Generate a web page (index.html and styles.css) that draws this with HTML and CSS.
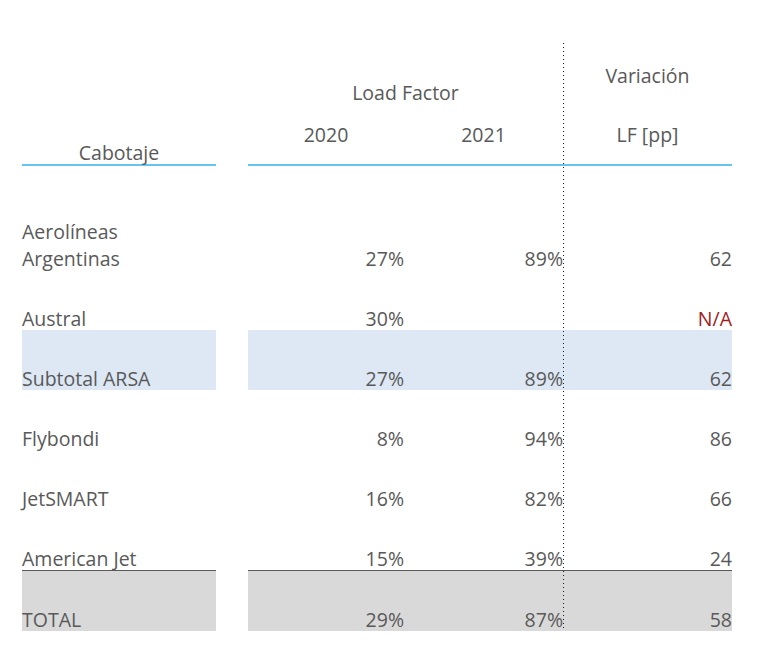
FILE: index.html
```html
<!DOCTYPE html>
<html lang="es">
<head>
<meta charset="utf-8">
<title>Cabotaje - Load Factor</title>
<link rel="stylesheet" href="styles.css">
</head>
<body>
<div class="table">
  <div class="divider"></div>
  <div class="head">
    <div class="label head-label"><span class="t">Cabotaje</span></div>
    <div class="data head-data">
      <div class="lf-group">
        <div class="group-title">Load Factor</div>
        <div class="years">
          <div class="c1 year">2020</div>
          <div class="c2 year">2021</div>
        </div>
      </div>
      <div class="c3 var-group">
        <div class="var-title">Variación</div>
        <div class="var-sub">LF [pp]</div>
      </div>
    </div>
  </div>
  <div class="rows">
    <div class="row">
      <div class="label"><span class="t">Aerolíneas<br>Argentinas</span></div>
      <div class="data"><div class="num c1"><span class="t">27%</span></div><div class="num c2"><span class="t">89%</span></div><div class="num c3"><span class="t">62</span></div></div>
    </div>
    <div class="row">
      <div class="label"><span class="t">Austral</span></div>
      <div class="data"><div class="num c1"><span class="t">30%</span></div><div class="num c2"></div><div class="num c3 na"><span class="t">N/A</span></div></div>
    </div>
    <div class="row subtotal">
      <div class="label"><span class="t">Subtotal ARSA</span></div>
      <div class="data"><div class="num c1"><span class="t">27%</span></div><div class="num c2"><span class="t">89%</span></div><div class="num c3"><span class="t">62</span></div></div>
    </div>
    <div class="row">
      <div class="label"><span class="t">Flybondi</span></div>
      <div class="data"><div class="num c1"><span class="t">8%</span></div><div class="num c2"><span class="t">94%</span></div><div class="num c3"><span class="t">86</span></div></div>
    </div>
    <div class="row">
      <div class="label"><span class="t">JetSMART</span></div>
      <div class="data"><div class="num c1"><span class="t">16%</span></div><div class="num c2"><span class="t">82%</span></div><div class="num c3"><span class="t">66</span></div></div>
    </div>
    <div class="row">
      <div class="label"><span class="t">American Jet</span></div>
      <div class="data"><div class="num c1"><span class="t">15%</span></div><div class="num c2"><span class="t">39%</span></div><div class="num c3"><span class="t">24</span></div></div>
    </div>
    <div class="row total">
      <div class="label"><span class="t">TOTAL</span></div>
      <div class="data"><div class="num c1"><span class="t">29%</span></div><div class="num c2"><span class="t">87%</span></div><div class="num c3"><span class="t">58</span></div></div>
    </div>
  </div>
</div>
</body>
</html>
```

FILE: styles.css
```css
html, body {
  margin: 0;
  padding: 0;
  background: #ffffff;
}

body {
  padding: 43px 0 0 22px;
  font-family: "Open Sans", "Liberation Sans", sans-serif;
  font-size: 19.5px;
  line-height: 27px;
  color: #595959;
}

.table {
  position: relative;
  width: 710px;
}

.divider {
  position: absolute;
  left: 541px;
  top: 0;
  width: 1px;
  height: 589px;
  background: repeating-linear-gradient(to bottom, #1e1e1e 0 1px, transparent 1px 4px);
  z-index: 2;
}

.t {
  display: block;
  margin-bottom: -2px;
}

/* header */
.head {
  display: flex;
  height: 123px;
}

.label {
  width: 194px;
  margin-right: 32px;
  flex: none;
}

.data {
  display: flex;
  flex: none;
  width: 484px;
}

.c1 { width: 156px; flex: none; }
.c2 { width: 159px; flex: none; }
.c3 { width: 169px; flex: none; }

.head-label {
  display: flex;
  align-items: flex-end;
  justify-content: center;
  box-sizing: border-box;
  border-bottom: 2px solid #66c4ee;
}

.head-data {
  border-bottom: 2px solid #66c4ee;
}

.lf-group {
  display: flex;
  flex-direction: column;
  padding-top: 36px;
}

.group-title {
  text-align: center;
}

.years {
  display: flex;
  margin-top: 15px;
}

.year {
  text-align: center;
}

.var-group {
  display: flex;
  flex-direction: column;
  align-items: center;
  padding-top: 19px;
}

.var-sub {
  margin-top: 32px;
}

/* body rows */
.rows {
  padding-top: 44px;
}

.row {
  display: flex;
  height: 60px;
}

.row .label,
.row .num {
  display: flex;
  flex-direction: column;
  justify-content: flex-end;
}

.row .num {
  align-items: flex-end;
  text-align: right;
}

.na {
  color: #a01c1c;
}

.subtotal .label,
.subtotal .data {
  background: #dde8f4;
}

.total {
  height: 61px;
}

.total .label,
.total .data {
  background: #d9d9d9;
  border-top: 1px solid #595959;
  font-weight: 500;
}
```
